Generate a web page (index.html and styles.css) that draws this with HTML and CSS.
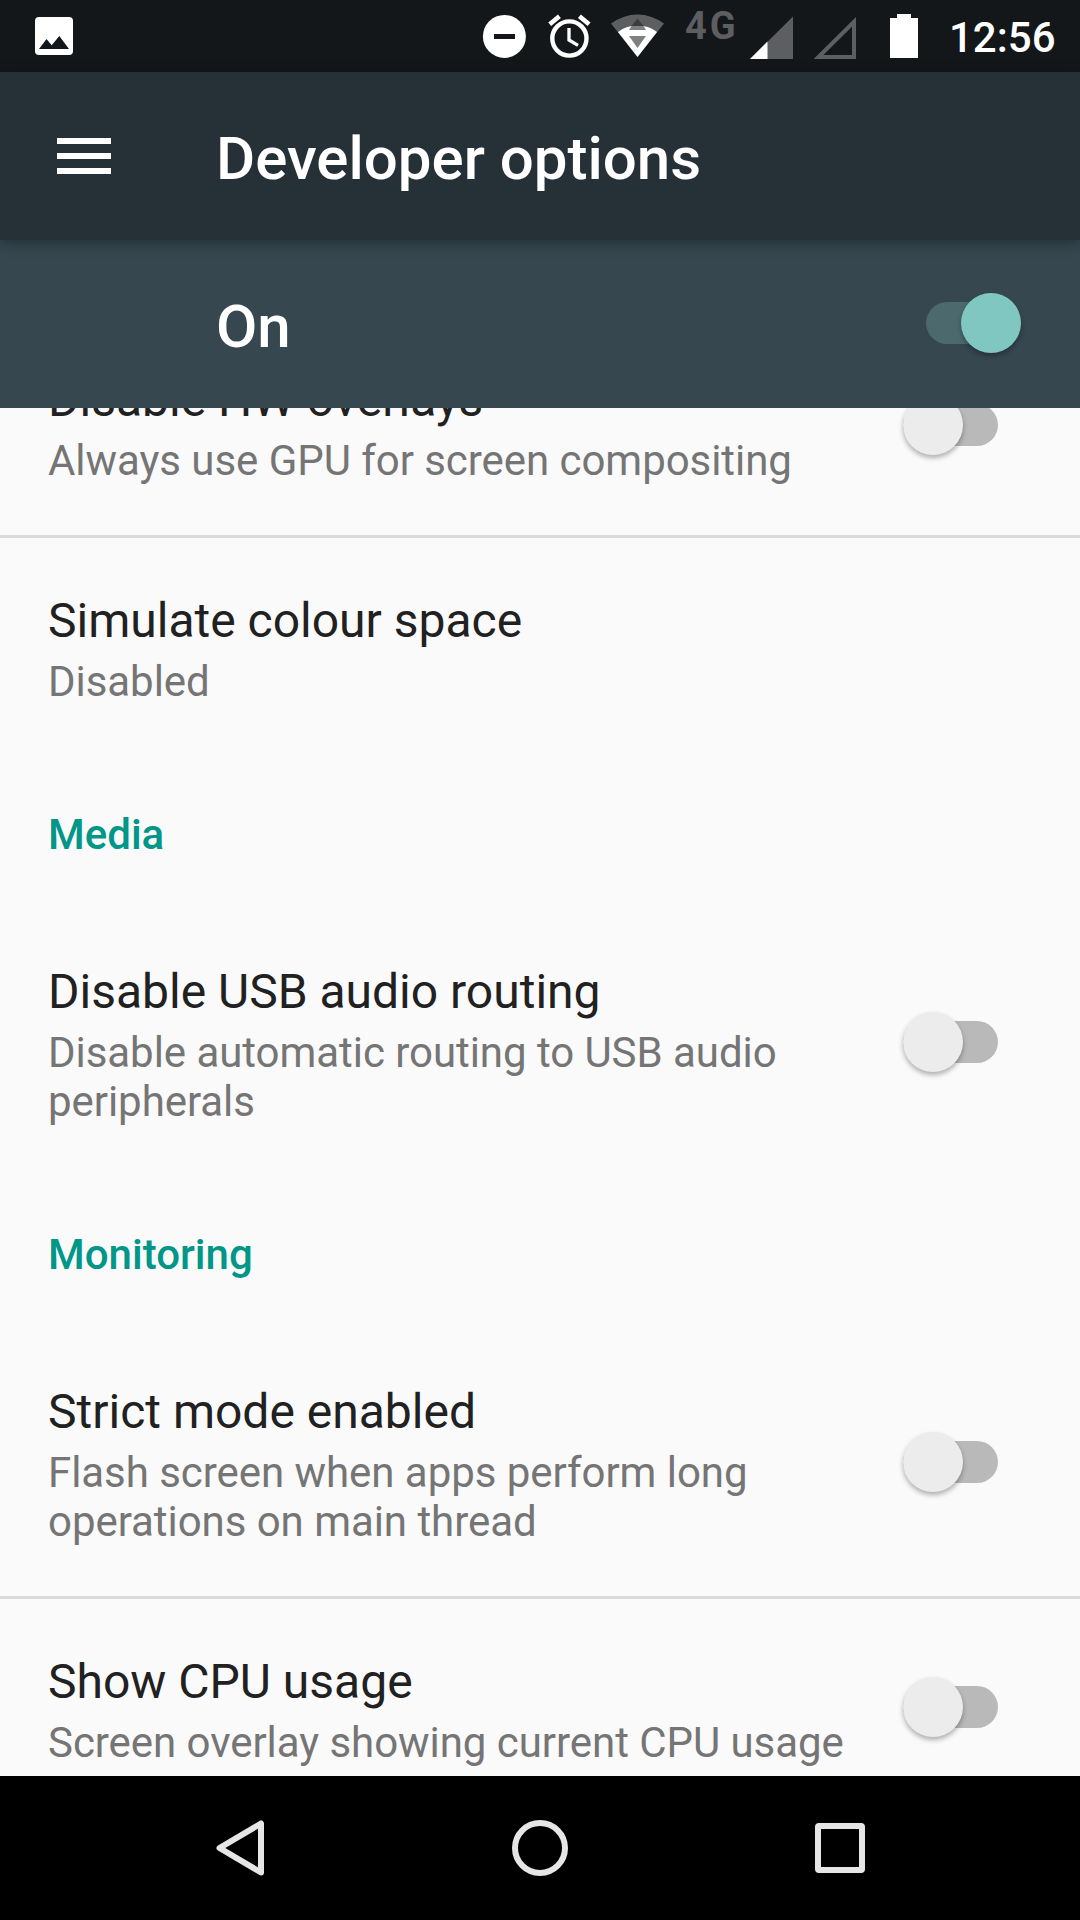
FILE: index.html
```html
<!DOCTYPE html>
<html lang="en">
<head>
<meta charset="UTF-8" />
<meta name="viewport" content="width=device-width, initial-scale=1" />
<title>Developer options</title>
<link rel="stylesheet" href="styles.css">
</head>
<body>
<div class="status-bar">
  <svg class="icon-picture" viewBox="0 0 38 38" aria-hidden="true">
    <rect width="38" height="38" rx="4" fill="#fff" />
    <path d="M4 32 L11.5 22 L16.7 28.3 L24.3 19 L34 32 Z" fill="#141719" />
  </svg>
  <!-- do not disturb, alarm, wifi, network, signal, battery -->
  <svg class="icon-tray" viewBox="480 0 450 72" aria-hidden="true">
    <circle cx="504.4" cy="36.4" r="21.5" fill="#fff" />
    <rect x="494" y="34" width="21" height="5" fill="#141719" />
    <g fill="none" stroke="#fff">
      <circle cx="569.4" cy="38.5" r="17.1" stroke-width="4.4" />
      <path d="M569 28 V40 L578 45.3" stroke-width="3.3" />
      <path d="M549.7 24.3 L559.4 16.3 M589.1 24.3 L579.4 16.3" stroke-width="4.6" />
    </g>
    <path d="M611 23.5 A44 44 0 0 1 664 23.5 L637.5 57 Z" fill="#5d5e60" />
    <path d="M618 32 A33 33 0 0 1 657 32 L637.5 57 Z" fill="#fff" />
    <path d="M637.5 18.5 L643.5 26 H631.5 Z" fill="#3a3c3e" />
    <path d="M631.5 26 H643.5 L646 30 H629 Z M629 36 H646 L637.5 48 Z" fill="#808080" />
    <text class="network" x="685" y="39">4G</text>
    <path d="M750 59 L793 16.5 V59 Z" fill="#5d5e60" />
    <path d="M750 59 L767.500 41.5 V59 Z" fill="#fff" />
    <path d="M818.500 57 L854 21.8 V57 Z" fill="none" stroke="#5d5e60" stroke-width="4" />
    <path d="M890 18 H897 V14 H911 V18 H918 V58 H890 Z" fill="#fff" />
  </svg>
  <span class="clock">12:56</span>
</div>

<header class="app-bar">
  <button class="menu-btn" aria-label="Menu">
    <svg viewBox="0 0 54 36" aria-hidden="true"><path d="M0 0h54v6H0z M0 15h54v6H0z M0 30h54v6H0z" fill="#fff" /></svg>
  </button>
  <h1>Developer options</h1>
</header>

<div class="switch-bar">
  <span>On</span>
  <div class="switch on" role="switch" aria-checked="true"></div>
</div>

<main class="settings">
  <div class="pref">
    <div class="pref-text">
      <div class="pref-title">Disable HW overlays</div>
      <div class="pref-summary">Always use GPU for screen compositing</div>
    </div>
    <div class="switch" role="switch" aria-checked="false"></div>
  </div>
  <div class="pref divided">
    <div class="pref-text">
      <div class="pref-title">Simulate colour space</div>
      <div class="pref-summary">Disabled</div>
    </div>
  </div>

  <h2>Media</h2>
  <div class="pref">
    <div class="pref-text">
      <div class="pref-title">Disable USB audio routing</div>
      <div class="pref-summary">Disable automatic routing to USB audio peripherals</div>
    </div>
    <div class="switch" role="switch" aria-checked="false"></div>
  </div>

  <h2>Monitoring</h2>
  <div class="pref">
    <div class="pref-text">
      <div class="pref-title">Strict mode enabled</div>
      <div class="pref-summary">Flash screen when apps perform long operations on main thread</div>
    </div>
    <div class="switch" role="switch" aria-checked="false"></div>
  </div>
  <div class="pref divided">
    <div class="pref-text">
      <div class="pref-title">Show CPU usage</div>
      <div class="pref-summary">Screen overlay showing current CPU usage</div>
    </div>
    <div class="switch" role="switch" aria-checked="false"></div>
  </div>
</main>

<nav class="nav-bar">
  <svg viewBox="0 0 60 60" aria-label="Back"><path d="M51 5.5 V54.500 L9.500 30 Z" /></svg>
  <svg viewBox="0 0 60 60" aria-label="Home"><circle cx="30" cy="30" r="25" /></svg>
  <svg viewBox="0 0 60 60" aria-label="Recent apps"><rect x="8" y="8" width="44" height="44" rx="1" /></svg>
</nav>
</body>
</html>
```
FILE: styles.css
```css
* {
  box-sizing: border-box;
}
body {
  margin: 0;
  width: 1080px;
  height: 1920px;
  overflow: hidden;
  display: flex;
  flex-direction: column;
  font-family: Roboto, "Noto Sans", sans-serif;
  background: #fafafa;
  color: #212121;
}

/* Status bar */
.status-bar {
  flex: none;
  height: 72px;
  display: flex;
  align-items: center;
  padding: 0 24px 0 35px;
  background: #141719;
}
.icon-picture {
  width: 38px;
  height: 38px;
}
.icon-tray {
  width: 450px;
  height: 72px;
  margin-left: auto;
  margin-right: 19px;
  padding-right: 0;
}
.network {
  font-size: 38px;
  font-weight: 700;
  letter-spacing: 3px;
  fill: #5d5e60;
}
.clock {
  width: 107px;
  padding-top: 3px;
  font-size: 42px;
  font-weight: 500;
  line-height: 72px;
  color: #fff;
}

/* App bar */
.app-bar {
  flex: none;
  height: 168px;
  display: flex;
  align-items: center;
  position: relative;
  z-index: 1;
  padding-left: 57px;
  background: #263137;
  color: #fff;
  box-shadow: 0 3px 12px rgba(0, 0, 0, 0.35);
}
.menu-btn {
  width: 159px;
  padding: 0;
  border: none;
  background: none;
  text-align: left;
}
.menu-btn svg {
  display: block;
  width: 54px;
  height: 36px;
}
.app-bar h1 {
  margin: 0;
  padding-top: 6px;
  font-size: 60px;
  font-weight: 500;
  line-height: 70px;
}

/* Master switch */
.switch-bar {
  flex: none;
  height: 168px;
  display: flex;
  align-items: center;
  justify-content: space-between;
  padding: 0 59px 0 216px;
  background: #37474f;
  color: #fff;
  font-size: 60px;
  font-weight: 500;
}
.switch-bar span {
  line-height: 70px;
  padding-top: 6px;
}

/* Switches */
.switch {
  flex: none;
  display: flex;
  align-items: center;
  width: 95px;
  height: 42px;
  margin-bottom: 2px;
  border-radius: 21px;
  background: #b9b9b9;
}
.switch::before {
  content: "";
  flex: none;
  width: 60px;
  height: 60px;
  border-radius: 50%;
  background: #ececec;
  box-shadow: 0 3px 5px rgba(0, 0, 0, 0.3);
}
.switch.on {
  justify-content: flex-end;
  background: #4c6a6d;
}
.switch.on::before {
  background: #7fc7c0;
}

/* Preference list */
.settings {
  flex: 1;
  min-height: 0;
  overflow: hidden;
}
.settings > .pref:first-child {
  margin-top: -91px;
}
.pref {
  display: flex;
  align-items: center;
  justify-content: space-between;
  padding: 48px 82px 48px 48px;
}
.pref.divided {
  border-top: 3px solid #dbdbdb;
}
.pref-text {
  max-width: 800px;
}
.pref-title {
  margin-bottom: 1px;
  font-size: 48px;
  line-height: 70px;
}
.pref-summary {
  padding-bottom: 2px;
  font-size: 42px;
  line-height: 49px;
  letter-spacing: -0.05px;
  color: #757575;
}
.settings h2 {
  height: 153px;
  margin: 0;
  padding: 54px 48px 0;
  font-size: 42px;
  font-weight: 500;
  line-height: 49px;
  color: #009688;
}

/* Navigation bar */
.nav-bar {
  flex: none;
  height: 144px;
  display: flex;
  align-items: center;
  justify-content: center;
  gap: 240px;
  background: #000;
}
.nav-bar svg {
  width: 60px;
  height: 60px;
  fill: none;
  stroke: #e6e6e6;
  stroke-width: 6;
  stroke-linejoin: round;
}
```
